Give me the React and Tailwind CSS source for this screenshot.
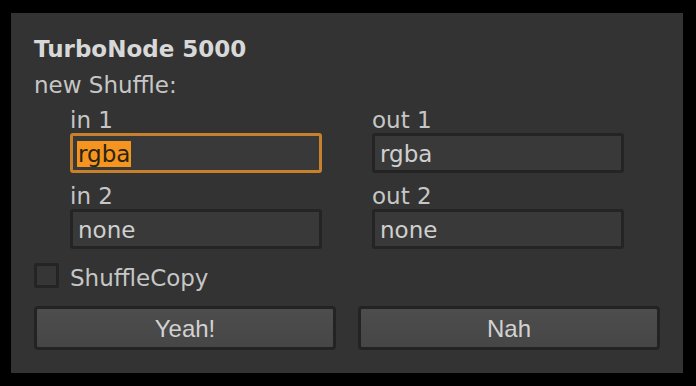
const Field = ({ label, value, focused }) => {
  return (
    <div className="flex flex-col">
      <span className="h-[25px] leading-[25px] text-[23px] text-[#c6c6c6]">{label}</span>
      <div
        className={
          focused
            ? "h-[40px] rounded-[3px] border-[3px] border-[#c7802b] bg-[#393939] pl-[4px] pt-px flex items-center"
            : "h-[40px] rounded-[3px] border-[3px] border-[#242424] bg-[#393939] pl-[5px] pt-px flex items-center"
        }
      >
        {focused ? (
          <span className="h-[26px] leading-[26px] text-[23px] bg-[#f5951f] text-[#2b2412] px-px">{value}</span>
        ) : (
          <span className="h-[26px] leading-[26px] text-[23px] text-[#cfcfcf]">{value}</span>
        )}
      </div>
    </div>
  );
};

const Button = ({ children }) => (
  <button className="h-[44px] rounded-[4px] border-[3px] border-[#232323] bg-gradient-to-b from-[#4d4d4d] to-[#464646] text-[#d2d2d2] text-[24px] font-['Liberation_Sans',sans-serif] leading-none pt-[2px]">
    {children}
  </button>
);

export default function App() {
  return (
    <div className="w-[696px] h-[386px] bg-black pt-[13px] pl-[11px] font-['DejaVu_Sans',sans-serif]">
      <div className="w-[672px] h-[360px] bg-[#333333] px-[23px] pt-[23px] flex flex-col">
        <h1 className="h-[27px] leading-[27px] text-[23px] font-bold text-[#d8d8d8]">TurboNode 5000</h1>
        <p className="mt-[9px] h-[27px] leading-[27px] text-[23px] text-[#c6c6c6]">new Shuffle:</p>

        <div className="mt-[9px] ml-[36px] grid grid-cols-[252px_252px] gap-x-[50px] gap-y-[11px]">
          <Field label="in 1" value="rgba" focused />
          <Field label="out 1" value="rgba" />
          <Field label="in 2" value="none" />
          <Field label="out 2" value="none" />
        </div>

        <label className="mt-[14px] flex items-start gap-[11px] h-[28px]">
          <span className="w-[25px] h-[25px] rounded-[2px] border-[3px] border-[#242424] bg-[#363636]"></span>
          <span className="pt-[3px] h-[25px] leading-[25px] text-[23px] text-[#c6c6c6]">ShuffleCopy</span>
        </label>

        <div className="mt-[15px] grid grid-cols-2 gap-[22px]">
          <Button>Yeah!</Button>
          <Button>Nah</Button>
        </div>
      </div>
    </div>
  );
}
